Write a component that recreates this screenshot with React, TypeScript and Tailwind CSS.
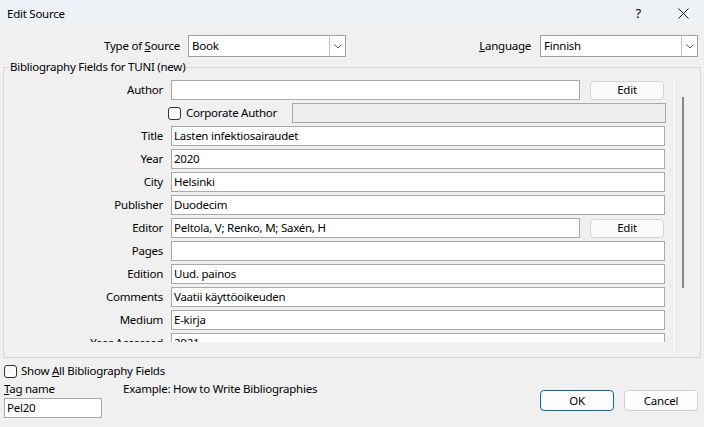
import React from 'react';

const fields: { label: string; value: string; edit?: boolean; corporate?: boolean }[] = [
  { label: 'Author', value: '', edit: true },
  { label: '', value: '', corporate: true },
  { label: 'Title', value: 'Lasten infektiosairaudet' },
  { label: 'Year', value: '2020' },
  { label: 'City', value: 'Helsinki' },
  { label: 'Publisher', value: 'Duodecim' },
  { label: 'Editor', value: 'Peltola, V; Renko, M; Saxén, H', edit: true },
  { label: 'Pages', value: '' },
  { label: 'Edition', value: 'Uud. painos' },
  { label: 'Comments', value: 'Vaatii käyttöoikeuden' },
  { label: 'Medium', value: 'E-kirja' },
  { label: 'Year Accessed', value: '2021' },
];

function Checkbox() {
  return <div className="w-[13px] h-[13px] rounded-[3px] border border-[#333] bg-[#fbfbfb] shrink-0" />;
}

function Combo({ value }: { value: string }) {
  return (
    <div className="w-[158px] h-[22px] flex border border-[#a0a0a0] bg-white">
      <div className="flex-1 pl-[3px] leading-[20px]">{value}</div>
      <div className="w-[16px] h-full border-l border-[#c8c8c8] flex items-center justify-center">
        <svg width="8" height="5" viewBox="0 0 8 5">
          <polyline points="0.5,0.5 4,4 7.5,0.5" fill="none" stroke="#606060" strokeWidth="1" />
        </svg>
      </div>
    </div>
  );
}

function Field({ value, w }: { value: string; w: string }) {
  return (
    <div className={`${w} h-[20px] border border-[#a9a9a9] bg-white pl-[2px] leading-[18px] whitespace-nowrap overflow-hidden`}>
      {value}
    </div>
  );
}

function Button({ label, primary }: { label: string; primary?: boolean }) {
  return (
    <div
      className={`w-[74px] h-[21px] rounded-[4px] bg-[#fdfdfd] flex items-center justify-center border ${
        primary ? 'border-[#0067c0]' : 'border-[#d0d0d0]'
      }`}
    >
      {label}
    </div>
  );
}

export default function App() {
  return (
    <div
      className="w-[704px] h-[427px] bg-[#f0f0f0] text-[11.5px] tracking-[-0.25px] text-black flex flex-col overflow-hidden"
      style={{ fontFamily: '"Noto Sans", "Open Sans", sans-serif' }}
    >
      {/* Title bar */}
      <div className="h-[27px] bg-[#eef2f6] flex items-center pl-[7px] shrink-0">
        <span>Edit Source</span>
        <span className="ml-auto text-[13px]">?</span>
        <svg className="ml-[37px] mr-[15px]" width="11" height="11" viewBox="0 0 11 11">
          <path d="M0.5 0.5 L10.5 10.5 M10.5 0.5 L0.5 10.5" stroke="#222" strokeWidth="1" />
        </svg>
      </div>

      {/* Source type / language */}
      <div className="mt-[8px] h-[22px] flex items-center shrink-0">
        <div className="w-[180px] text-right">
          Type of <span className="underline">S</span>ource
        </div>
        <div className="ml-[8px]">
          <Combo value="Book" />
        </div>
        <div className="ml-auto">
          <span className="underline">L</span>anguage
        </div>
        <div className="ml-[9px] mr-[6px]">
          <Combo value="Finnish" />
        </div>
      </div>

      {/* Group box */}
      <fieldset className="mt-[2px] mx-[3px] h-[299px] border border-[#d8d8d8] shrink-0">
        <legend className="ml-[5px] px-[1px] leading-[16px]">Bibliography Fields for TUNI (new)</legend>
        <div className="flex">
          <div className="mt-[2px] h-[265px] w-[662px] overflow-hidden pt-[3px] flex flex-col gap-[3px]">
            {fields.map((f, i) => (
              <div key={i} className="flex items-center h-[20px] shrink-0">
                <div className="w-[159px] text-right whitespace-nowrap">{f.label}</div>
                {f.corporate ? (
                  <div className="ml-[9px] flex items-center">
                    <Checkbox />
                    <span className="ml-[5px] w-[103px] whitespace-nowrap">Corporate Author</span>
                    <div className="ml-[3px] w-[374px] h-[20px] border border-[#a9a9a9] bg-[#efefef]" />
                  </div>
                ) : f.edit ? (
                  <div className="ml-[8px] flex items-center">
                    <Field value={f.value} w="w-[409px]" />
                    <div className="ml-[10px] w-[74px] h-[19px] rounded-[4px] border border-[#d3d3d3] bg-[#fbfbfb] flex items-center justify-center">
                      Edit
                    </div>
                  </div>
                ) : (
                  <div className="ml-[8px]">
                    <Field value={f.value} w="w-[494px]" />
                  </div>
                )}
              </div>
            ))}
          </div>
          <div className="ml-[8px] mt-[5px] w-px h-[273px] bg-white" />
          <div className="ml-[7px] mt-[22px] w-[2px] h-[191px] bg-[#8a8a8a]" />
        </div>
      </fieldset>

      {/* Bottom */}
      <div className="flex px-[4px]">
        <div className="flex flex-col">
          <div className="mt-[5px] h-[16px] flex items-center">
            <Checkbox />
            <span className="ml-[4px]">
              Show <span className="underline">A</span>ll Bibliography Fields
            </span>
          </div>
          <div className="mt-[2px] h-[16px] flex items-center">
            <span className="w-[119px]">
              <span className="underline">T</span>ag name
            </span>
            <span>Example: How to Write Bibliographies</span>
          </div>
          <div className="mt-[1px] w-[98px] h-[20px] border border-[#a9a9a9] bg-white pl-[2px] leading-[18px]">Pel20</div>
        </div>
        <div className="ml-auto mt-[32px] flex gap-[10px] mr-[2px]">
          <Button label="OK" primary />
          <Button label="Cancel" />
        </div>
      </div>
    </div>
  );
}
